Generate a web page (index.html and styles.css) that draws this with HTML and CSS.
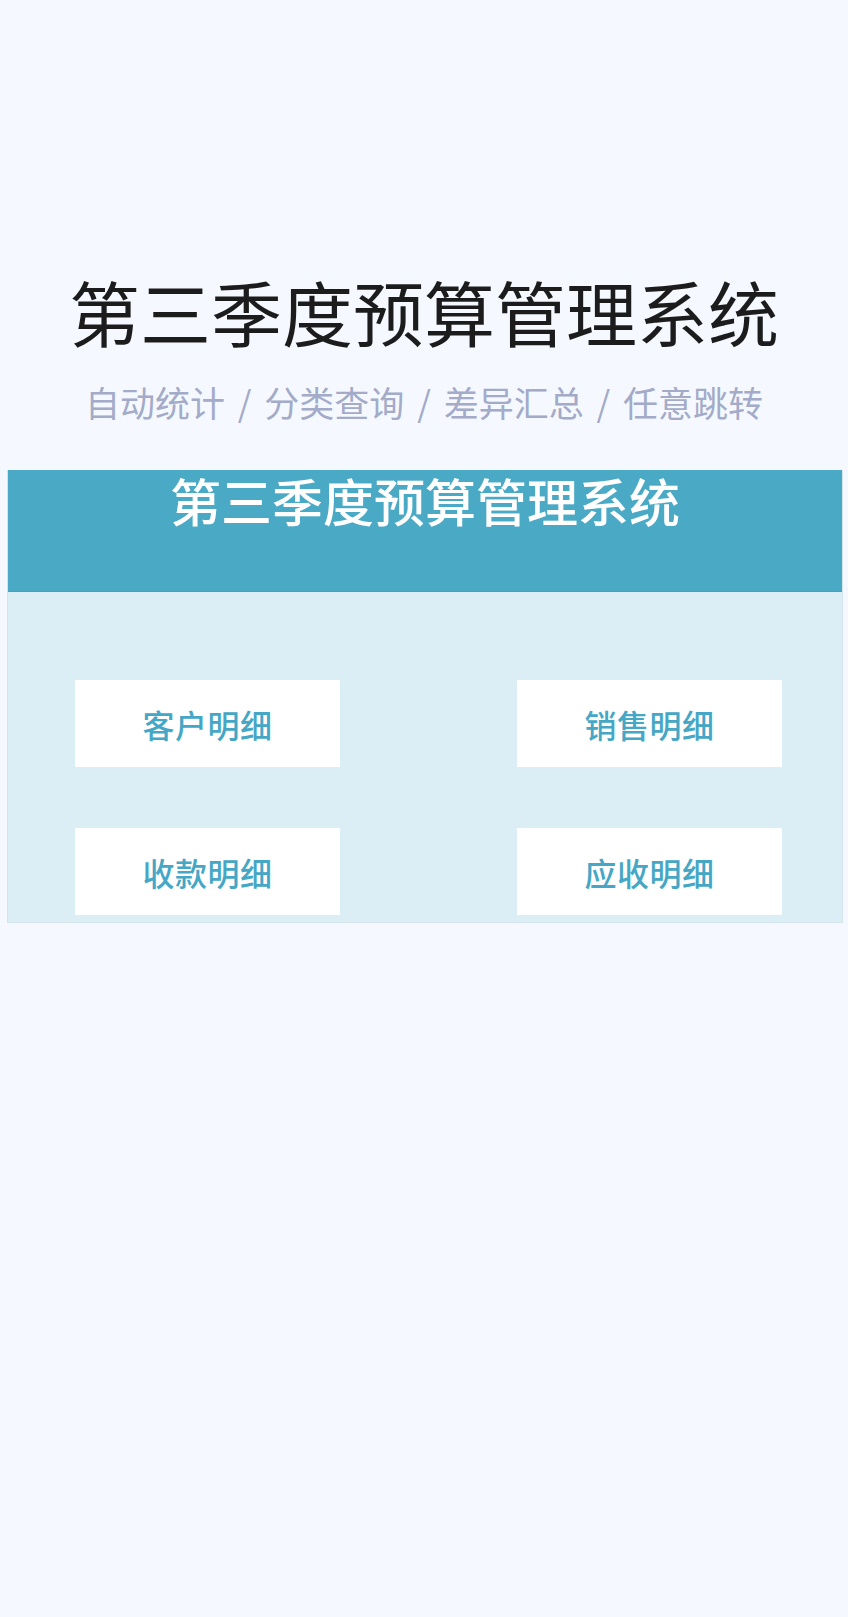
FILE: index.html
```html
<html>
<head>
  <meta charset="utf-8">
  <title>第三季度预算管理系统</title>
  <link rel="stylesheet" href="styles.css">
</head>
<body>
  <!-- Page heading -->
  <div class="intro">
    <h1 class="intro-title">第三季度预算管理系统</h1>
    <p class="intro-sub">自动统计 / 分类查询 / 差异汇总 / 任意跳转</p>
  </div>

  <!-- Navigation panel -->
  <div class="panel">
    <div class="panel-head">第三季度预算管理系统</div>
    <div class="panel-body">
      <a class="nav-btn" href="#">客户明细</a>
      <a class="nav-btn" href="#">销售明细</a>
      <a class="nav-btn" href="#">收款明细</a>
      <a class="nav-btn" href="#">应收明细</a>
    </div>
  </div>
</body>
</html>
```

FILE: styles.css
```css
/* Page background and font */
body {
  margin: 0;
  background: #f5f9ff;
  font-family: "Noto Sans CJK SC", "Noto Sans", sans-serif;
}

/* Top heading block */
.intro {
  padding-top: 275px;
  text-align: center;
}

.intro-title {
  margin: 0;
  font-size: 71px;
  line-height: 71px;
  font-weight: 400;
  color: #1c1c1c;
}

.intro-sub {
  margin: 38px 0 0;
  font-size: 35px;
  line-height: 35px;
  word-spacing: 5px;
  color: #a3abc9;
}

/* Panel with the title bar and buttons */
.panel {
  margin: 51px 5px 0 7px;
  background: #dbedf5;
  border: 1px solid #d3e4ec;
  border-top: none;
}

.panel-head {
  height: 116px;
  padding-top: 5px;
  background: #4aa9c4;
  border-bottom: 1px solid #43a1bc;
  color: #fff;
  font-size: 51px;
  line-height: 51px;
  font-weight: 500;
  text-align: center;
}

.panel-body {
  display: grid;
  grid-template-columns: 265px 265px;
  column-gap: 177px;
  row-gap: 61px;
  padding: 88px 0 7px 67px;
}

/* Navigation buttons */
.nav-btn {
  display: flex;
  align-items: center;
  justify-content: center;
  height: 87px;
  background: #fff;
  color: #45a7c5;
  font-size: 32px;
  font-weight: 500;
  letter-spacing: 0.5px;
  text-decoration: none;
}
```
